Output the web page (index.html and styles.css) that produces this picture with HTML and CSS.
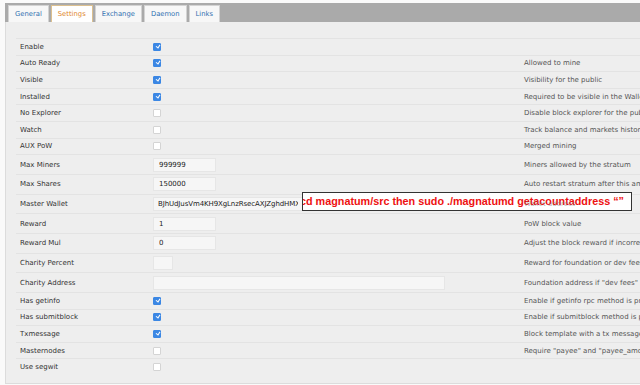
FILE: index.html
```html
<!DOCTYPE html>
<html lang="en">
<head>
    <meta charset="UTF-8">
    <title>Coin Settings</title>
    <link rel="stylesheet" href="styles.css">
</head>
<body>
    <div class="pagina">
        <!-- Abas -->
        <div class="abas">
            <div class="aba">General</div>
            <div class="aba ativa">Settings</div>
            <div class="aba">Exchange</div>
            <div class="aba">Daemon</div>
            <div class="aba">Links</div>
        </div>

        <!-- Painel de configuracoes -->
        <div class="painel">
            <div class="linha"><div class="rotulo">Enable</div><div class="campo"><span class="check on"></span></div><div class="desc"></div></div>
            <div class="linha"><div class="rotulo">Auto Ready</div><div class="campo"><span class="check on"></span></div><div class="desc">Allowed to mine</div></div>
            <div class="linha"><div class="rotulo">Visible</div><div class="campo"><span class="check on"></span></div><div class="desc">Visibility for the public</div></div>
            <div class="linha"><div class="rotulo">Installed</div><div class="campo"><span class="check on"></span></div><div class="desc">Required to be visible in the Wallets board</div></div>
            <div class="linha"><div class="rotulo">No Explorer</div><div class="campo"><span class="check"></span></div><div class="desc">Disable block explorer for the public</div></div>
            <div class="linha"><div class="rotulo">Watch</div><div class="campo"><span class="check"></span></div><div class="desc">Track balance and markets history</div></div>
            <div class="linha"><div class="rotulo">AUX PoW</div><div class="campo"><span class="check"></span></div><div class="desc">Merged mining</div></div>
            <div class="linha alta"><div class="rotulo">Max Miners</div><div class="campo"><input class="texto" value="999999"></div><div class="desc">Miners allowed by the stratum</div></div>
            <div class="linha alta"><div class="rotulo">Max Shares</div><div class="campo"><input class="texto" value="150000"></div><div class="desc">Auto restart stratum after this amount of shares</div></div>
            <div class="linha alta"><div class="rotulo">Master Wallet</div><div class="campo"><input class="texto largo" value="BJhUdJusVm4KH9XgLnzRsecAXJZghdHMXe"></div><div class="desc fundo">Wallet address</div></div>
            <div class="linha alta"><div class="rotulo">Reward</div><div class="campo"><input class="texto" value="1"></div><div class="desc">PoW block value</div></div>
            <div class="linha alta"><div class="rotulo">Reward Mul</div><div class="campo"><input class="texto" value="0"></div><div class="desc">Adjust the block reward if incorrect</div></div>
            <div class="linha alta"><div class="rotulo">Charity Percent</div><div class="campo"><input class="texto curto" value=""></div><div class="desc">Reward for foundation or dev fees, generally between 1 and 10 %</div></div>
            <div class="linha alta"><div class="rotulo">Charity Address</div><div class="campo"><input class="texto endereco" value=""></div><div class="desc">Foundation address if "dev fees" are required</div></div>
            <div class="linha"><div class="rotulo">Has getinfo</div><div class="campo"><span class="check on"></span></div><div class="desc">Enable if getinfo rpc method is present</div></div>
            <div class="linha"><div class="rotulo">Has submitblock</div><div class="campo"><span class="check on"></span></div><div class="desc">Enable if submitblock method is present</div></div>
            <div class="linha"><div class="rotulo">Txmessage</div><div class="campo"><span class="check on"></span></div><div class="desc">Block template with a tx message</div></div>
            <div class="linha"><div class="rotulo">Masternodes</div><div class="campo"><span class="check"></span></div><div class="desc">Require "payee" and "payee_amount" fields</div></div>
            <div class="linha"><div class="rotulo">Use segwit</div><div class="campo"><span class="check"></span></div><div class="desc"></div></div>

            <!-- Nota sobreposta -->
            <div class="nota">cd magnatum/src then sudo ./magnatumd getacountaddress “”</div>
        </div>
    </div>
</body>
</html>
```

FILE: styles.css
```css
body {
    margin: 0;
    padding: 0;
    background-color: #fafafa;
    font-family: "DejaVu Sans", Verdana, sans-serif;
    font-size: 7px;
    color: #333;
    overflow: hidden;
}

.pagina {
    padding: 3px 0 0 5px;
    width: 900px;
}

.abas {
    display: flex;
    gap: 2px;
    background-color: #aaaaaa;
    padding: 2px 0 0 3px;
    height: 17px;
}

.aba {
    background-color: #f7f7f7;
    border: 1px solid #d3d3d3;
    border-bottom: none;
    color: #2f70b0;
    padding: 0 6px;
    line-height: 16px;
    font-size: 6.8px;
}

.aba.ativa {
    background-color: #fff;
    color: #e0872c;
    border-color: #dcc08f;
}

.painel {
    position: relative;
    background-color: #eeeeee;
    border-left: 1px solid #dcdcdc;
    border-bottom: 1px solid #dcdcdc;
    padding: 16px 0 8px 10px;
}

.linha {
    display: grid;
    grid-template-columns: 137px 371px 1fr;
    align-items: center;
    height: 16.6px;
    border-top: 1px solid #e3e3e3;
    box-sizing: border-box;
    white-space: nowrap;
}

.linha:last-of-type {
    border-bottom: 1px solid #e3e3e3;
}

.linha.alta {
    height: 19.7px;
}

.rotulo {
    padding-left: 4px;
    color: #333;
}

.desc {
    color: #555;
}

.desc.fundo {
    position: relative;
    z-index: 2;
    color: rgba(120, 120, 120, 0.55);
}

.check {
    display: block;
    width: 6px;
    height: 6px;
    border: 1px solid #d4d4d4;
    border-radius: 1px;
    background-color: #fff;
}

.check.on {
    background-color: #3b87e4;
    border-color: #3b87e4;
    position: relative;
}

.check.on::after {
    content: "";
    position: absolute;
    left: 1px;
    top: 0px;
    width: 3px;
    height: 1.5px;
    border-right: 1px solid #fff;
    border-top: 1px solid #fff;
    transform: rotate(125deg);
    transform-origin: 60% 80%;
}

.texto {
    display: block;
    width: 63px;
    height: 14px;
    box-sizing: border-box;
    border: 1px solid #e6e6e6;
    background-color: #f6f6f6;
    padding: 0 5px;
    font-family: "DejaVu Sans", Verdana, sans-serif;
    font-size: 7px;
    color: #222;
    margin: 0;
}

.texto.largo {
    width: 150px;
    padding: 0 4px;
    letter-spacing: -0.1px;
}

.texto.curto {
    width: 20px;
}

.texto.endereco {
    width: 292px;
}

.nota {
    position: absolute;
    left: 296px;
    top: 170px;
    width: 330px;
    height: 19px;
    box-sizing: border-box;
    border: 1.5px solid #333;
    background-color: #fff;
    color: #ee1111;
    font-family: "Liberation Sans", Arial, sans-serif;
    font-weight: bold;
    font-size: 10.8px;
    line-height: 16px;
    text-indent: -3px;
    overflow: hidden;
    white-space: nowrap;
    z-index: 1;
}
```
